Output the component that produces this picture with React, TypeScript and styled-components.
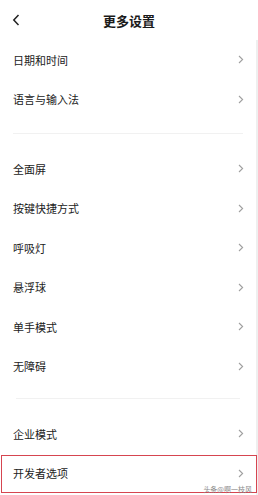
import styled, { createGlobalStyle } from 'styled-components'

const GlobalStyle = createGlobalStyle`
  html, body {
    margin: 0;
    padding: 0;
    background: #ffffff;
  }
  body {
    font-family: "Noto Sans CJK SC", "Noto Sans", sans-serif;
    color: #222222;
  }
`

/* ── Styled ── */
const Screen = styled.div`
  position: relative;
  width: 258px;
  height: 495px;
  overflow: hidden;
  background: #ffffff;
`

const Header = styled.header`
  display: grid;
  grid-template-columns: 40px 1fr 40px;
  align-items: center;
  height: 40px;
`

const BackButton = styled.div`
  display: flex;
  align-items: center;
  padding-left: 12px;
  height: 100%;
`

const Title = styled.h1`
  margin: 0;
  text-align: center;
  font-size: 13px;
  font-weight: 700;
  color: #1a1a1a;
`

const Body = styled.div`
  border-right: 2px solid #efefef;
  height: 455px;
`

const Group = styled.section<{ $padTop?: number; $padBottom?: number }>`
  display: flex;
  flex-direction: column;
  padding-top: ${({ $padTop }) => $padTop ?? 0}px;
  padding-bottom: ${({ $padBottom }) => $padBottom ?? 0}px;
`

const Divider = styled.div<{ $inset: number }>`
  height: 1px;
  margin: 0 ${({ $inset }) => $inset}px;
  background: #f1f1f1;
`

const Row = styled.div<{ $marked?: boolean }>`
  position: relative;
  display: flex;
  align-items: center;
  justify-content: space-between;
  height: 39.5px;
  padding: 0 13px;
  font-size: 11px;
  color: #222222;

  ${({ $marked }) =>
    $marked &&
    `
    &::after {
      content: '';
      position: absolute;
      left: 1px;
      right: -1px;
      top: 1px;
      bottom: 0px;
      border: 1.5px solid #d64550;
      pointer-events: none;
    }
  `}
`

const Chevron = styled.svg`
  width: 6px;
  height: 9px;
  margin-right: -1px;
`

const Watermark = styled.span`
  position: absolute;
  right: 6px;
  bottom: 1px;
  font-size: 7px;
  color: #8a8a8a;
  letter-spacing: 0;
`

/* ── Data ── */
const groups = [
  { items: ['日期和时间', '语言与输入法'], padTop: 0, padBottom: 14, inset: 13 },
  {
    items: ['全面屏', '按键快捷方式', '呼吸灯', '悬浮球', '单手模式', '无障碍'],
    padTop: 15,
    padBottom: 12,
    inset: 16,
  },
  { items: ['企业模式', '开发者选项'], padTop: 15, padBottom: 0, inset: 0 },
]

function Arrow() {
  return (
    <Chevron viewBox="0 0 6 9">
      <path d="M1 1 L4.6 4.5 L1 8" fill="none" stroke="#a0a0a0" strokeWidth="1.1" />
    </Chevron>
  )
}

/* ── Component ── */
export default function App() {
  return (
    <>
      <GlobalStyle />
      <Screen>
        <Header>
          <BackButton>
            <svg width="8" height="12" viewBox="0 0 8 12">
              <path d="M6.5 1 L1.8 6 L6.5 11" fill="none" stroke="#222" strokeWidth="1.5" />
            </svg>
          </BackButton>
          <Title>更多设置</Title>
          <span />
        </Header>
        <Body>
          {groups.map((g, gi) => (
            <div key={gi}>
              <Group $padTop={g.padTop} $padBottom={g.padBottom}>
                {g.items.map((label) => (
                  <Row key={label} $marked={label === '开发者选项'}>
                    <span>{label}</span>
                    <Arrow />
                  </Row>
                ))}
              </Group>
              {gi < groups.length - 1 && <Divider $inset={g.inset} />}
            </div>
          ))}
        </Body>
        <Watermark>头条@啊一枝风</Watermark>
      </Screen>
    </>
  )
}
